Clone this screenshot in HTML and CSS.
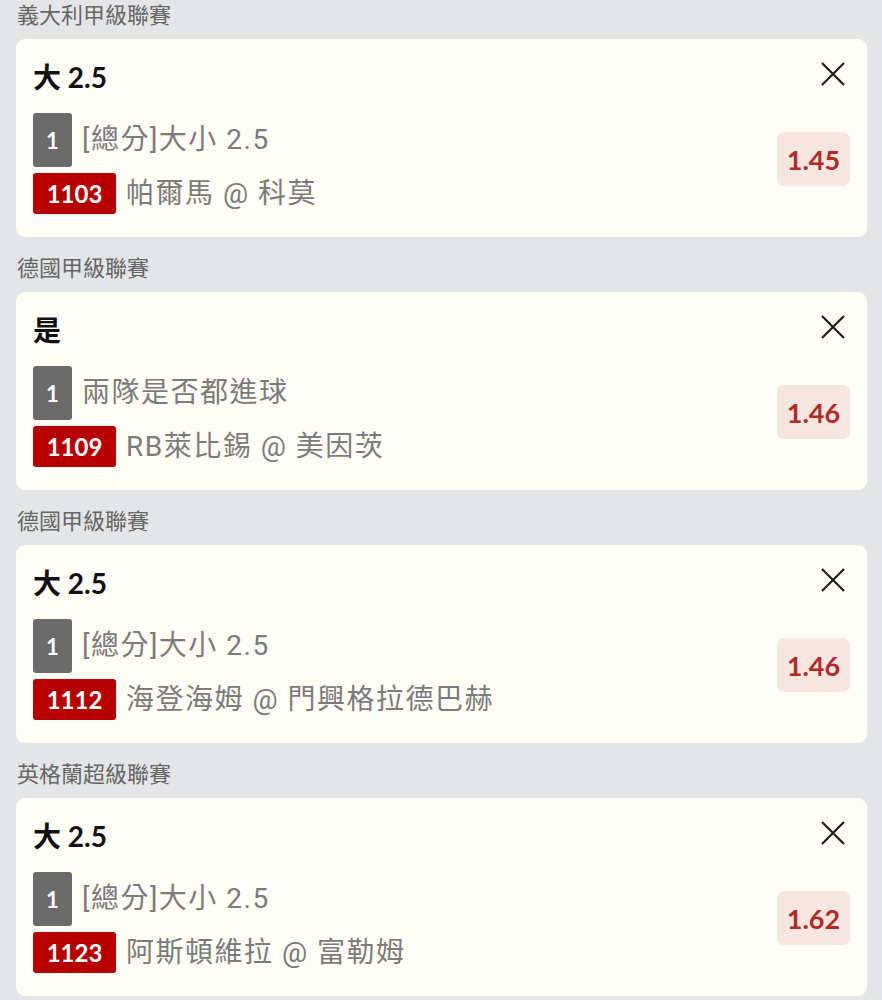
FILE: index.html
```html
<!DOCTYPE html>
<html lang="zh-Hant">
<head>
  <meta charset="UTF-8">
  <meta name="viewport" content="width=device-width, initial-scale=1.0">
  <title>投注單</title>
  <link rel="stylesheet" href="styles.css">
</head>
<body>
  <div class="slip">
    <!-- 義大利 -->
    <div class="league">義大利甲級聯賽</div>
    <div class="bet-card">
      <div class="bet-info">
        <div class="bet-title">大 2.5</div>
        <div class="bet-row">
          <span class="tag tag-grey">1</span>
          <span class="bet-text">[總分]大小 2.5</span>
        </div>
        <div class="bet-row">
          <span class="tag tag-red">1103</span>
          <span class="bet-text">帕爾馬 @ 科莫</span>
        </div>
      </div>
      <div class="bet-side">
        <button class="close-btn" aria-label="移除">
          <svg viewBox="0 0 26 26" width="26" height="26"><path d="M2 2 L24 24 M24 2 L2 24" stroke="#1c1c1c" stroke-width="2.2" fill="none"/></svg>
        </button>
        <div class="odds">1.45</div>
      </div>
    </div>

    <!-- 德國 -->
    <div class="league">德國甲級聯賽</div>
    <div class="bet-card">
      <div class="bet-info">
        <div class="bet-title">是</div>
        <div class="bet-row">
          <span class="tag tag-grey">1</span>
          <span class="bet-text">兩隊是否都進球</span>
        </div>
        <div class="bet-row">
          <span class="tag tag-red">1109</span>
          <span class="bet-text">RB萊比錫 @ 美因茨</span>
        </div>
      </div>
      <div class="bet-side">
        <button class="close-btn" aria-label="移除">
          <svg viewBox="0 0 26 26" width="26" height="26"><path d="M2 2 L24 24 M24 2 L2 24" stroke="#1c1c1c" stroke-width="2.2" fill="none"/></svg>
        </button>
        <div class="odds">1.46</div>
      </div>
    </div>

    <div class="league">德國甲級聯賽</div>
    <div class="bet-card">
      <div class="bet-info">
        <div class="bet-title">大 2.5</div>
        <div class="bet-row">
          <span class="tag tag-grey">1</span>
          <span class="bet-text">[總分]大小 2.5</span>
        </div>
        <div class="bet-row">
          <span class="tag tag-red">1112</span>
          <span class="bet-text">海登海姆 @ 門興格拉德巴赫</span>
        </div>
      </div>
      <div class="bet-side">
        <button class="close-btn" aria-label="移除">
          <svg viewBox="0 0 26 26" width="26" height="26"><path d="M2 2 L24 24 M24 2 L2 24" stroke="#1c1c1c" stroke-width="2.2" fill="none"/></svg>
        </button>
        <div class="odds">1.46</div>
      </div>
    </div>

    <!-- 英格蘭 -->
    <div class="league">英格蘭超級聯賽</div>
    <div class="bet-card">
      <div class="bet-info">
        <div class="bet-title">大 2.5</div>
        <div class="bet-row">
          <span class="tag tag-grey">1</span>
          <span class="bet-text">[總分]大小 2.5</span>
        </div>
        <div class="bet-row">
          <span class="tag tag-red">1123</span>
          <span class="bet-text">阿斯頓維拉 @ 富勒姆</span>
        </div>
      </div>
      <div class="bet-side">
        <button class="close-btn" aria-label="移除">
          <svg viewBox="0 0 26 26" width="26" height="26"><path d="M2 2 L24 24 M24 2 L2 24" stroke="#1c1c1c" stroke-width="2.2" fill="none"/></svg>
        </button>
        <div class="odds">1.62</div>
      </div>
    </div>
  </div>
</body>
</html>
```

FILE: styles.css
```css
/* Reset */
* {
  margin: 0;
  padding: 0;
  box-sizing: border-box;
}
body {
  font-family: 'Lato', 'Noto Sans CJK TC', sans-serif;
  background: #e4e5e7;
  overflow: hidden;
}
.slip {
  padding: 2px 15px 0 16px;
}
/* Tên giải đấu */
.league {
  font-family: 'Roboto', 'Noto Sans CJK TC', sans-serif;
  font-size: 22px;
  line-height: 27px;
  color: #666;
  padding-left: 1px;
  margin-bottom: 10px;
}
/* Thẻ cược */
.bet-card {
  display: flex;
  height: 198px;
  background: #fffdf5;
  border-radius: 9px;
  padding: 22px 17px 0 17px;
  margin-bottom: 18px;
}
.bet-info {
  flex: 1;
  display: flex;
  flex-direction: column;
}
.bet-title {
  font-size: 28px;
  font-weight: 700;
  line-height: 32px;
  color: #111;
  margin-bottom: 20px;
}
.bet-row {
  display: flex;
  align-items: center;
  margin-bottom: 6px;
}
.tag {
  display: inline-flex;
  align-items: center;
  justify-content: center;
  color: #fff;
  font-weight: 700;
  border-radius: 3px;
  margin-right: 10px;
}
.tag-grey {
  width: 39px;
  height: 54px;
  background: #6b6b6b;
  font-size: 22px;
}
.tag-red {
  width: 83px;
  height: 41px;
  background: #b60000;
  font-size: 24px;
}
.bet-text {
  font-family: 'Roboto', 'Noto Sans CJK TC', sans-serif;
  font-size: 28px;
  letter-spacing: 1.5px;
  color: #7b7b7b;
  line-height: 34px;
}
/* Cột bên phải */
.bet-side {
  display: flex;
  flex-direction: column;
  align-items: flex-end;
}
.close-btn {
  border: none;
  background: none;
  width: 26px;
  height: 26px;
  margin-right: 4px;
  cursor: pointer;
}
.close-btn svg {
  display: block;
}
.odds {
  margin-top: 45px;
  width: 73px;
  height: 54px;
  display: flex;
  align-items: center;
  justify-content: center;
  background: #f7e6df;
  border-radius: 7px;
  color: #b02a2a;
  font-size: 27px;
  font-weight: 700;
}
```
